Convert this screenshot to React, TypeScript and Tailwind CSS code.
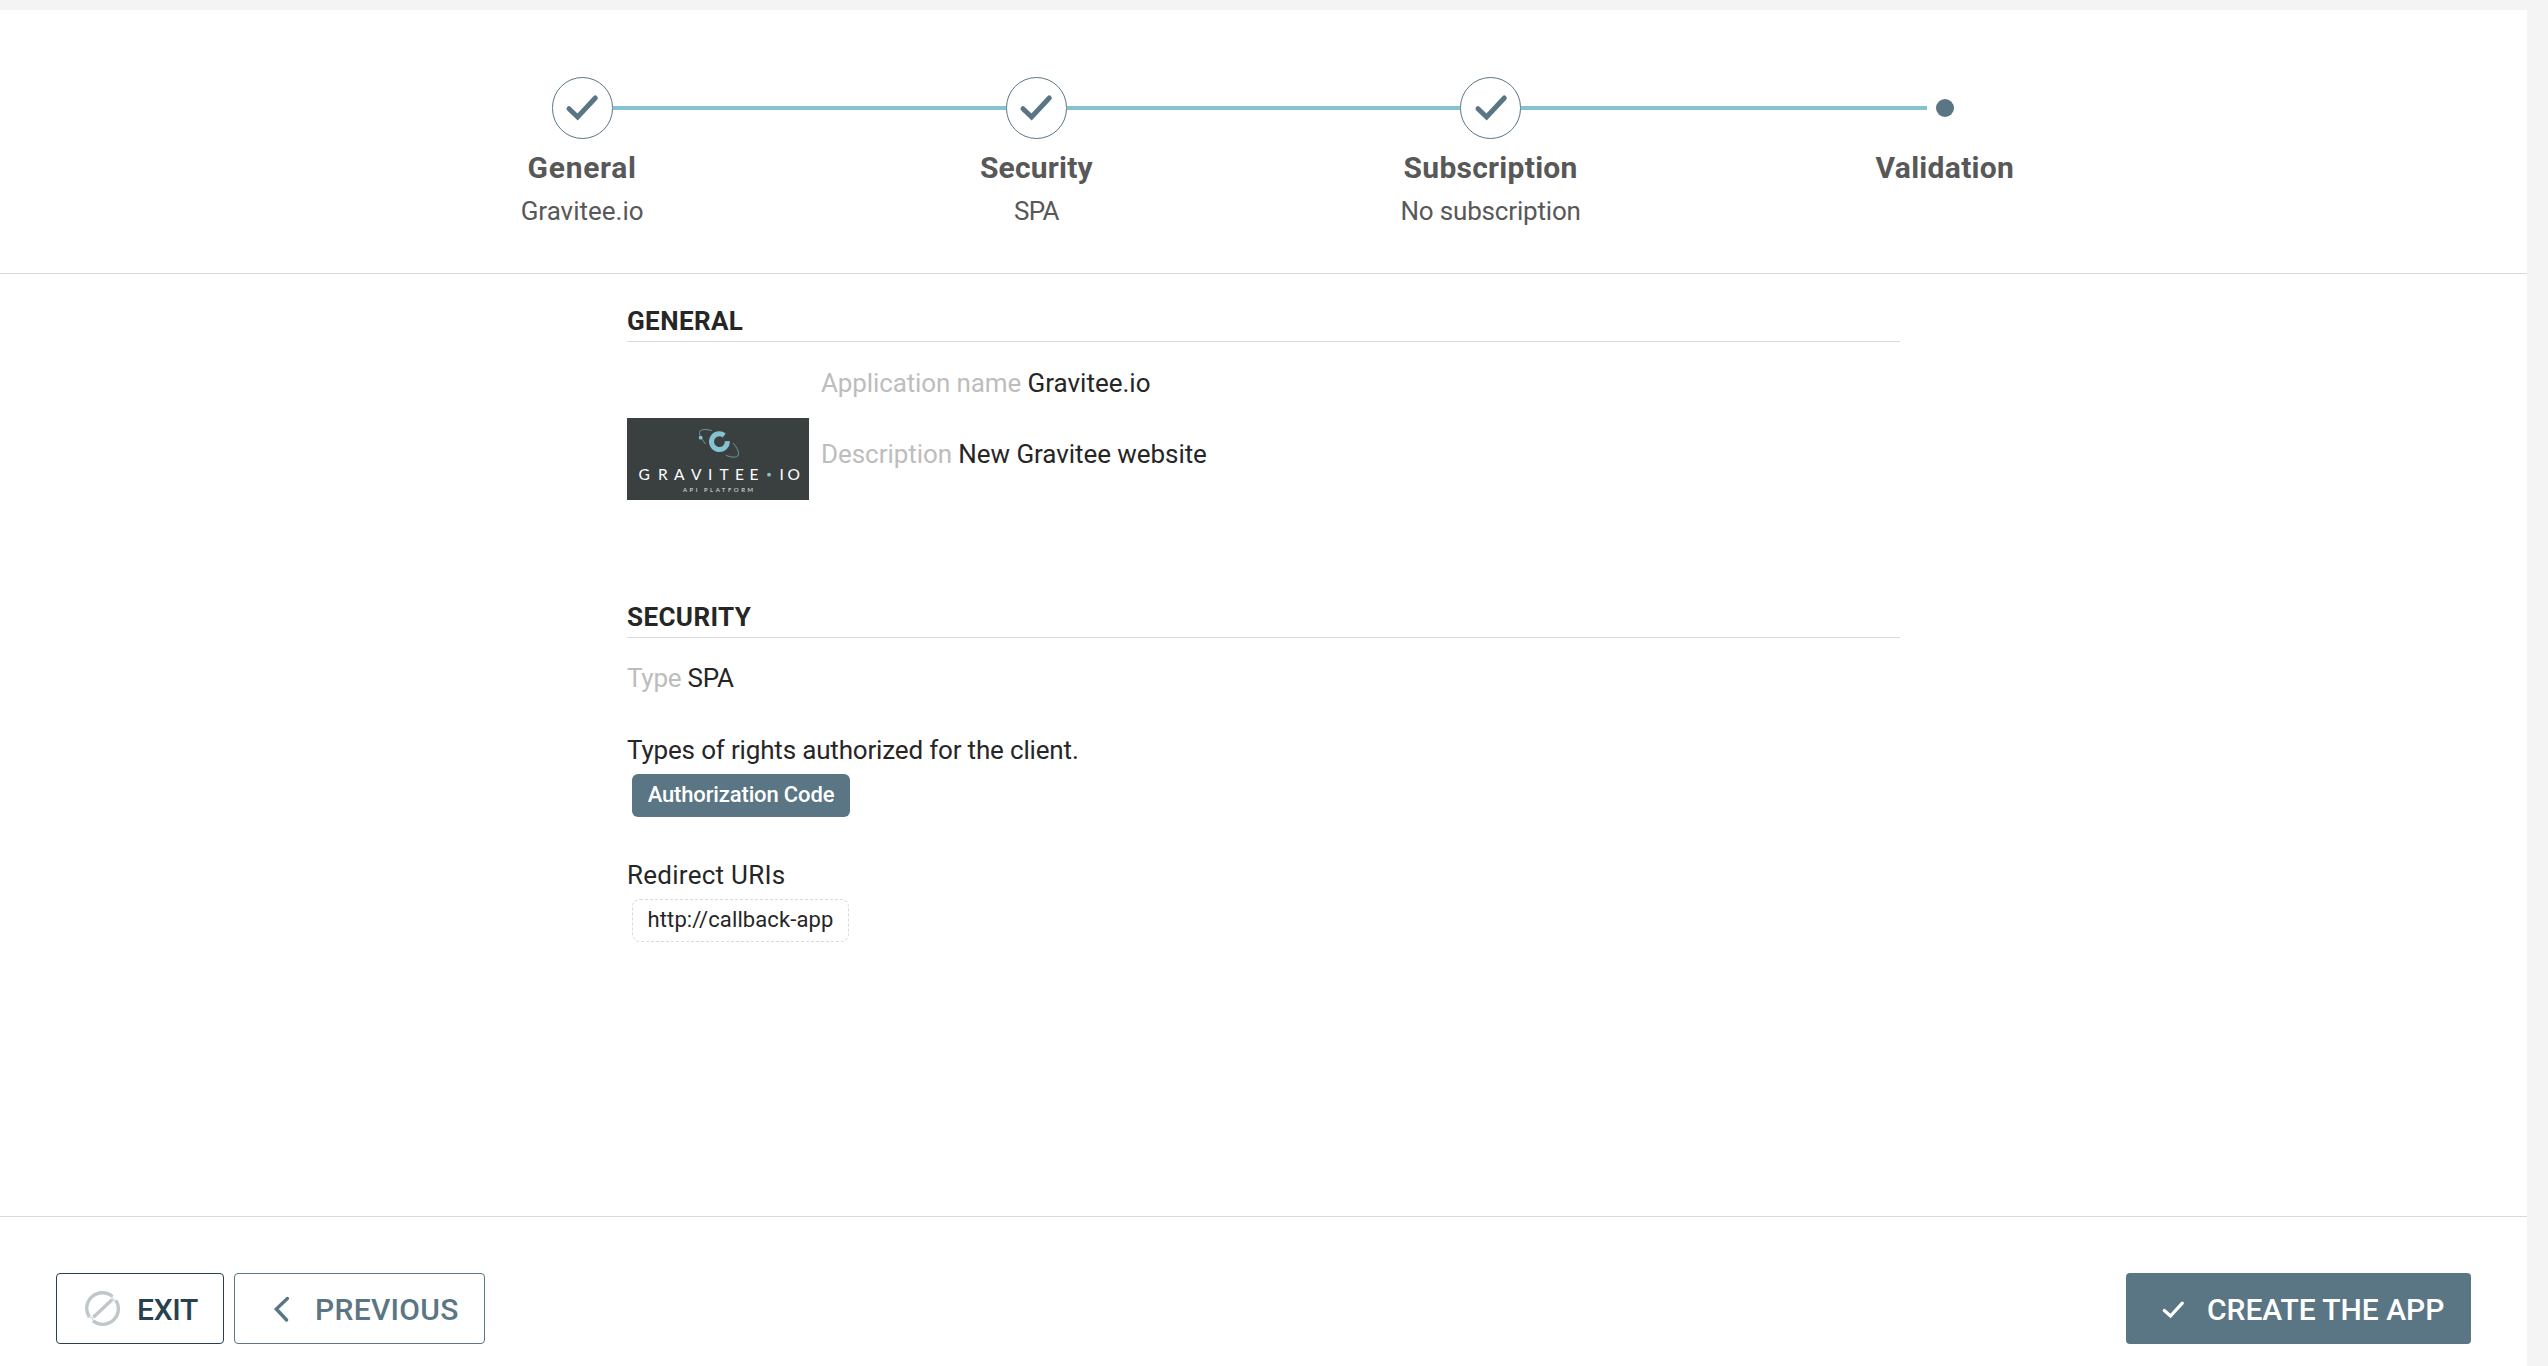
import type { ReactNode } from "react";

type Step = { title: string; tracking: string; detail?: string; detailTracking?: string; done: boolean };

const steps: Step[] = [
  { title: "General", tracking: "tracking-[0.7px]", detail: "Gravitee.io", detailTracking: "tracking-normal", done: true },
  { title: "Security", tracking: "tracking-[0.2px]", detail: "SPA", detailTracking: "tracking-[-0.8px]", done: true },
  { title: "Subscription", tracking: "tracking-[0.27px]", detail: "No subscription", detailTracking: "tracking-[-0.18px]", done: true },
  { title: "Validation", tracking: "tracking-[0.3px]", done: false },
];

function StepMarker({ done }: { done: boolean }) {
  if (!done) {
    return <span className="z-10 flex size-9 items-center justify-center bg-white"><span className="size-[18px] rounded-full bg-[#5a7684]" /></span>;
  }
  return (
    <span className="z-10 flex h-[62px] w-[61px] items-center justify-center rounded-full border border-[#5a7684] bg-white">
      <svg width="62" height="62" viewBox="0 0 62 62" fill="none" className="shrink-0">
        <path d="M18 31.700 26.600 40 44.300 21" stroke="#5a7684" strokeWidth="5" strokeLinecap="round" strokeLinejoin="miter" />
      </svg>
    </span>
  );
}

function Stepper() {
  return (
    <div className="ml-[355px] flex w-[1817px]">
      {steps.map((s, i) => (
        <div key={s.title} className="flex flex-1 flex-col items-center text-[#585858]">
          <div className="flex h-[62px] w-full items-center">
            <span className={i > 0 ? "h-1 flex-1 bg-[#86c3d0]" : "h-1 flex-1"} />
            <StepMarker done={s.done} />
            <span className={i < steps.length - 1 ? "h-1 flex-1 bg-[#86c3d0]" : "h-1 flex-1"} />
          </div>
          <div className={`mt-[9px] text-[30px] leading-10 font-bold ${s.tracking}`}>{s.title}</div>
          {s.detail && <div className={`mt-[7px] text-[26px] leading-8 ${s.detailTracking}`}>{s.detail}</div>}
        </div>
      ))}
    </div>
  );
}

function SectionTitle({ children }: { children: ReactNode }) {
  return <h2 className="h-[37px] border-b border-[#d9d9d9] text-[26px] leading-8 font-bold tracking-[0.4px]">{children}</h2>;
}

function Logo() {
  return (
    <svg width="182" height="82" viewBox="0 0 182 82" fill="none" className="block shrink-0">
      <rect width="182" height="82" fill="#3a3f3f" />
      <path d="M97.200 17.400A7.900 7.900 0 1 0 100.300 23.200" stroke="#86c3d0" strokeWidth="5" />
      <g stroke="#6fa3ae" strokeWidth="0.9">
        <path d="M84.700 12.600C80 11.200 75.400 11 73.400 12.600 71.400 14.600 72.600 19 78.700 26" />
        <path d="M106 25C110.500 30 113 35.600 110.700 38 108.800 39.800 103.500 39.300 98.700 37.300" />
      </g>
      <circle cx="73.700" cy="19.700" r="1.900" fill="#86c3d0" />
      <text y="62.300" x="11.500 31 47 64 81 92.500 108 122.500" fill="#fff" fontSize="15.500" className="font-['Lato']">GRAVITEE</text>
      <circle cx="142" cy="56.700" r="1.900" fill="#86c3d0" />
      <text y="62.300" x="152.500 160.500" fill="#fff" fontSize="15.500" className="font-['Lato']">IO</text>
      <text y="74.300" x="56" textLength="70" fill="#e2e4e4" fontSize="6" className="font-['Lato']">API PLATFORM</text>
    </svg>
  );
}

function Label({ children }: { children: ReactNode }) {
  return <span className="text-[#bdbdbd]">{children}</span>;
}

export default function App() {
  return (
    <div className="h-[1366px] w-full overflow-hidden bg-[#f4f4f4] pt-[10px] pr-[21px] font-['Roboto','Liberation_Sans',sans-serif] text-[26px] leading-8 whitespace-nowrap text-[#262626]">
      <div className="flex h-full flex-col bg-white">
        <header className="h-[264px] border-b border-[#d9d9d9] pt-[67px]">
          <Stepper />
        </header>

        <main className="ml-[627px] w-[1273px] flex-1 pt-[31px]">
          <section className="h-[296px]">
            <SectionTitle>GENERAL</SectionTitle>
            <div className="flex">
              <div className="mt-[76px]"><Logo /></div>
              <div className="mt-[25px] ml-3">
                <div className="tracking-[-0.12px]"><Label>Application name</Label> <span className="tracking-normal">Gravitee.io</span></div>
                <div className="mt-[39px] tracking-[-0.06px]"><Label>Description</Label> New Gravitee website</div>
              </div>
            </div>
          </section>

          <section>
            <SectionTitle>SECURITY</SectionTitle>
            <div className="mt-6 tracking-[-0.25px]"><Label>Type</Label> SPA</div>
            <div className="mt-10 tracking-[-0.17px]">Types of rights authorized for the client.</div>
            <span className="mt-2 ml-[5px] flex h-[43px] w-[218px] items-center justify-center rounded-md bg-[#5a7684] pb-[2px] text-[22px] tracking-[-0.14px] text-white">
              <span className="font-medium">Authorization Code</span>
            </span>
            <div className="mt-[42px] tracking-[0.26px]">Redirect URIs</div>
            <span className="mt-2 ml-[5px] flex h-[43px] w-[217px] items-center justify-center rounded-lg border border-dashed border-[#d9d9d9] pb-[2px] text-[22px] tracking-[0.1px]">
              http://callback-app
            </span>
          </section>
        </main>

        <footer className="flex h-[150px] items-start border-t border-[#d9d9d9] px-14 pt-14 text-[30px] font-medium">
          <button className="flex h-[71px] w-[168px] items-center rounded-[4px] border border-[#27424e] pl-7 text-[#27424e]">
            <svg width="35" height="35" viewBox="0 0 35 35" fill="none" stroke="#bfc7cb" strokeWidth="3.400">
              <path d="M4.300 26A15.600 15.600 0 0 1 27.400 5.500M30.900 9.300A15.600 15.600 0 0 1 8 29.900" />
              <path d="M8.300 26.200 27.300 8.600" />
              <path d="M27.500 5.500 28.100 9 31 9.200M8 29.800 7.500 26.700 4.400 26.200" strokeWidth="0.800" />
            </svg>
            <span className="ml-[17px] pt-[2px] tracking-[-0.3px]">EXIT</span>
          </button>
          <button className="ml-[10px] flex h-[71px] w-[251px] items-center rounded-[4px] border border-[#5a7684] pl-[33px] text-[#5a7684]">
            <svg width="28" height="28" viewBox="0 0 28 28" fill="none" stroke="currentColor" strokeWidth="3.400" strokeLinecap="round">
              <path d="M19.400 3.500 8.300 14 18.600 25" />
            </svg>
            <span className="ml-[19px] pt-[2px] tracking-[0.3px]">PREVIOUS</span>
          </button>
          <button className="ml-auto flex h-[71px] w-[345px] items-center rounded-[4px] bg-[#5a7684] pl-[34px] text-white">
            <svg width="28" height="28" viewBox="0 0 28 28" fill="none" stroke="currentColor" strokeWidth="3.200" strokeLinecap="round">
              <path d="M4.300 15.500 10.500 21 22.300 8.200" />
            </svg>
            <span className="ml-[19px] pt-[2px] tracking-[-0.02px]">CREATE THE APP</span>
          </button>
        </footer>
      </div>
    </div>
  );
}
